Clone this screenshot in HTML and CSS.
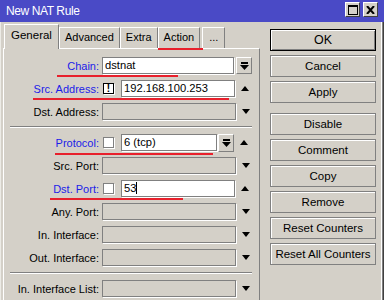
FILE: index.html
```html
<!DOCTYPE html>
<html lang="en">
  <head>
    <meta charset="UTF-8" />
    <title>New NAT Rule</title>
    <link rel="stylesheet" href="styles.css">
  </head>
  <body>
    <div class="window">
      <div class="titlebar">
        <span class="title">New NAT Rule</span>
        <div class="title-buttons">
          <span class="tbtn">
            <svg width="10" height="10" viewBox="0 0 10 10"><rect x="0.5" y="0.5" width="9" height="9" fill="none" stroke="#000"/><rect x="0" y="0" width="10" height="2" fill="#000"/></svg>
          </span>
          <span class="tbtn">
            <svg width="9" height="8" viewBox="0 0 9 8"><path d="M1 0 L8 8 M8 0 L1 8" stroke="#000" stroke-width="2"/></svg>
          </span>
        </div>
      </div>

      <div class="content">
        <div class="main">
          <div class="tabs">
            <div class="tab active">General</div>
            <div class="tab">Advanced</div>
            <div class="tab">Extra</div>
            <div class="tab marked">Action</div>
            <div class="tab">...</div>
          </div>

          <div class="panel">
            <div class="row mark-chain">
              <label class="lbl blue">Chain:</label>
              <div class="field white">dstnat</div>
              <span class="drop">
                <svg width="9" height="8" viewBox="0 0 9 8"><rect x="1" y="0" width="7" height="2" fill="#000"/><path d="M0 3 H9 L4.5 8 Z" fill="#000"/></svg>
              </span>
            </div>
            <div class="row mark-src">
              <label class="lbl blue">Src. Address:</label>
              <span class="check"><span class="box bang">!</span></span>
              <div class="field white">192.168.100.253</div>
              <span class="arrow up"></span>
            </div>
            <div class="row">
              <label class="lbl">Dst. Address:</label>
              <div class="field"></div>
              <span class="arrow down"></span>
            </div>

            <div class="sep"></div>

            <div class="row mark-proto">
              <label class="lbl blue">Protocol:</label>
              <span class="check"><span class="box"></span></span>
              <div class="field white short">6 (tcp)</div>
              <span class="drop proto">
                <svg width="9" height="8" viewBox="0 0 9 8"><rect x="1" y="0" width="7" height="2" fill="#000"/><path d="M0 3 H9 L4.5 8 Z" fill="#000"/></svg>
              </span>
              <span class="arrow up"></span>
            </div>
            <div class="row">
              <label class="lbl">Src. Port:</label>
              <div class="field"></div>
              <span class="arrow down"></span>
            </div>
            <div class="row mark-dport">
              <label class="lbl blue">Dst. Port:</label>
              <span class="check"><span class="box"></span></span>
              <div class="field white">53<span class="caret"></span></div>
              <span class="arrow up"></span>
            </div>
            <div class="row">
              <label class="lbl">Any. Port:</label>
              <div class="field"></div>
              <span class="arrow down"></span>
            </div>
            <div class="row">
              <label class="lbl">In. Interface:</label>
              <div class="field"></div>
              <span class="arrow down"></span>
            </div>
            <div class="row">
              <label class="lbl">Out. Interface:</label>
              <div class="field"></div>
              <span class="arrow down"></span>
            </div>

            <div class="sep"></div>

            <div class="row">
              <label class="lbl">In. Interface List:</label>
              <div class="field"></div>
              <span class="arrow down"></span>
            </div>
          </div>
        </div>

        <div class="actions">
          <button class="btn default">OK</button>
          <button class="btn">Cancel</button>
          <button class="btn">Apply</button>
          <button class="btn spaced">Disable</button>
          <button class="btn">Comment</button>
          <button class="btn">Copy</button>
          <button class="btn">Remove</button>
          <button class="btn">Reset Counters</button>
          <button class="btn">Reset All Counters</button>
        </div>
      </div>
    </div>
  </body>
</html>
```

FILE: styles.css
```css
:root {
  --face: #d4d0c8;
  --shadow: #808080;
  --title: #4a4ac6;
  --link: #1c1ce8;
  --mark: #e8202c;
}

body {
  margin: 0;
  font-family: "Liberation Sans", Arial, sans-serif;
  font-size: 11px;
  color: #000;
}

.window {
  width: 384px;
  height: 300px;
  background: var(--face);
  overflow: hidden;
  box-shadow: inset 1px 0 0 #ecebe6, inset -1px 0 0 #404040, inset -2px 0 0 var(--shadow), inset -3px 0 0 #fff;
}

.titlebar {
  height: 22px;
  background: var(--title);
  display: flex;
  align-items: center;
  justify-content: space-between;
  padding: 0 6px 0 6px;
}

.title {
  color: #fff;
  font-size: 12px;
  letter-spacing: -0.4px;
  margin-top: -1px;
}

.title-buttons {
  display: flex;
  gap: 3px;
  margin-top: -3px;
}

.tbtn {
  width: 13px;
  height: 13px;
  background: var(--face);
  border: 1px solid;
  border-color: #fff #404040 #404040 #fff;
  display: flex;
  align-items: center;
  justify-content: center;
}

.content {
  display: flex;
  padding-top: 2px;
}

.main {
  width: 257px;
  margin-left: 3px;
}

/* tabs */
.tabs {
  height: 24px;
  display: flex;
  align-items: flex-end;
  padding-left: 1px;
  position: relative;
  z-index: 1;
}

.tab {
  height: 20px;
  padding: 0 5px;
  line-height: 19px;
  border: 1px solid;
  border-bottom: none;
  border-color: #fff var(--shadow) transparent #fff;
  background: var(--face);
  position: relative;
}

.tab.active {
  height: 24px;
  line-height: 21px;
  padding: 0 6px;
  margin-bottom: -1px;
  font-size: 11.5px;
}

.tab.marked::after {
  content: "";
  position: absolute;
  left: -1px;
  right: -4px;
  bottom: -2px;
  height: 2px;
  background: var(--mark);
}

.tab:last-child {
  margin-left: 2px;
  padding: 0 6px;
}

/* panel */
.panel {
  height: 260px;
  border-top: 1px solid #fff;
  border-left: 1px solid #fff;
  border-right: 1px solid var(--shadow);
  padding-top: 8px;
}

.row {
  display: flex;
  align-items: center;
  height: 17px;
  margin-bottom: 6px;
  position: relative;
}

.lbl {
  width: 95px;
  text-align: right;
  margin-right: 3px;
  white-space: nowrap;
}

.lbl.blue {
  color: var(--link);
}

.field {
  width: 130px;
  height: 15px;
  border: 1px solid var(--shadow);
  box-shadow: 1px 1px 0 #fff;
  background: var(--face);
  line-height: 15px;
  padding-left: 2px;
  box-sizing: content-box;
  font-size: 11.2px;
}

.field.white {
  background: #fff;
  width: 128px;
  padding-left: 2px;
}

.check + .field {
  width: 110px;
}

.check + .field.short {
  width: 92px;
}

.check {
  width: 19px;
  display: flex;
}

.box {
  width: 9px;
  height: 9px;
  margin-left: 1px;
  border: 1px solid var(--shadow);
  box-shadow: 1px 1px 0 #fff;
  background: #fff;
}

.box.bang {
  border-color: #000;
  font-weight: bold;
  font-size: 10px;
  line-height: 9px;
  text-align: center;
}

.caret {
  display: inline-block;
  width: 1px;
  height: 12px;
  background: #000;
  vertical-align: -2px;
}

.drop {
  width: 14px;
  height: 15px;
  margin-left: 2px;
  border: 1px solid;
  border-color: #fff var(--shadow) var(--shadow) #fff;
  display: flex;
  align-items: center;
  justify-content: center;
}

.drop.proto {
  margin-left: 1px;
  height: 16px;
}

.arrow {
  width: 0;
  height: 0;
  margin-left: 6px;
  border-left: 4.5px solid transparent;
  border-right: 4.5px solid transparent;
}

.arrow.up {
  border-bottom: 5px solid #000;
}

.arrow.down {
  border-top: 5px solid #000;
}

.drop.proto + .arrow {
  margin-left: 6px;
}

.sep {
  margin: 1px 7px 6px 6px;
  height: 1px;
  border-top: 1px solid var(--shadow);
  border-bottom: 1px solid #fff;
  height: 0;
}

.sep + .row {
  margin-top: 0;
}

.panel .sep:nth-of-type(2) {
  margin-bottom: 5px;
}

/* red markers */
.row::after {
  position: absolute;
  height: 2px;
  background: var(--mark);
}

.mark-chain::after {
  content: "";
  left: 53px;
  width: 121px;
  top: 18px;
}

.mark-src::after {
  content: "";
  left: 29px;
  width: 196px;
  top: 18px;
}

.mark-proto::after {
  content: "";
  left: 51px;
  width: 158px;
  top: 19px;
}

.mark-dport::after {
  content: "";
  left: 46px;
  width: 133px;
  top: 18px;
}

/* buttons */
.actions {
  display: flex;
  flex-direction: column;
  gap: 4px;
  margin-left: 10px;
  padding-top: 5px;
}

.btn {
  width: 106px;
  height: 22px;
  font-family: "Liberation Sans", Arial, sans-serif;
  font-size: 11.5px;
  background: var(--face);
  border: 1px solid var(--shadow);
  box-shadow: inset 1px 1px 0 #fff;
  padding: 0;
  color: #000;
}

.btn.default {
  border-color: #000;
  font-size: 12.5px;
  box-shadow: inset 1px 1px 0 #fff, inset -1px -1px 0 var(--shadow);
}

.btn.spaced {
  margin-top: 6px;
}
```
